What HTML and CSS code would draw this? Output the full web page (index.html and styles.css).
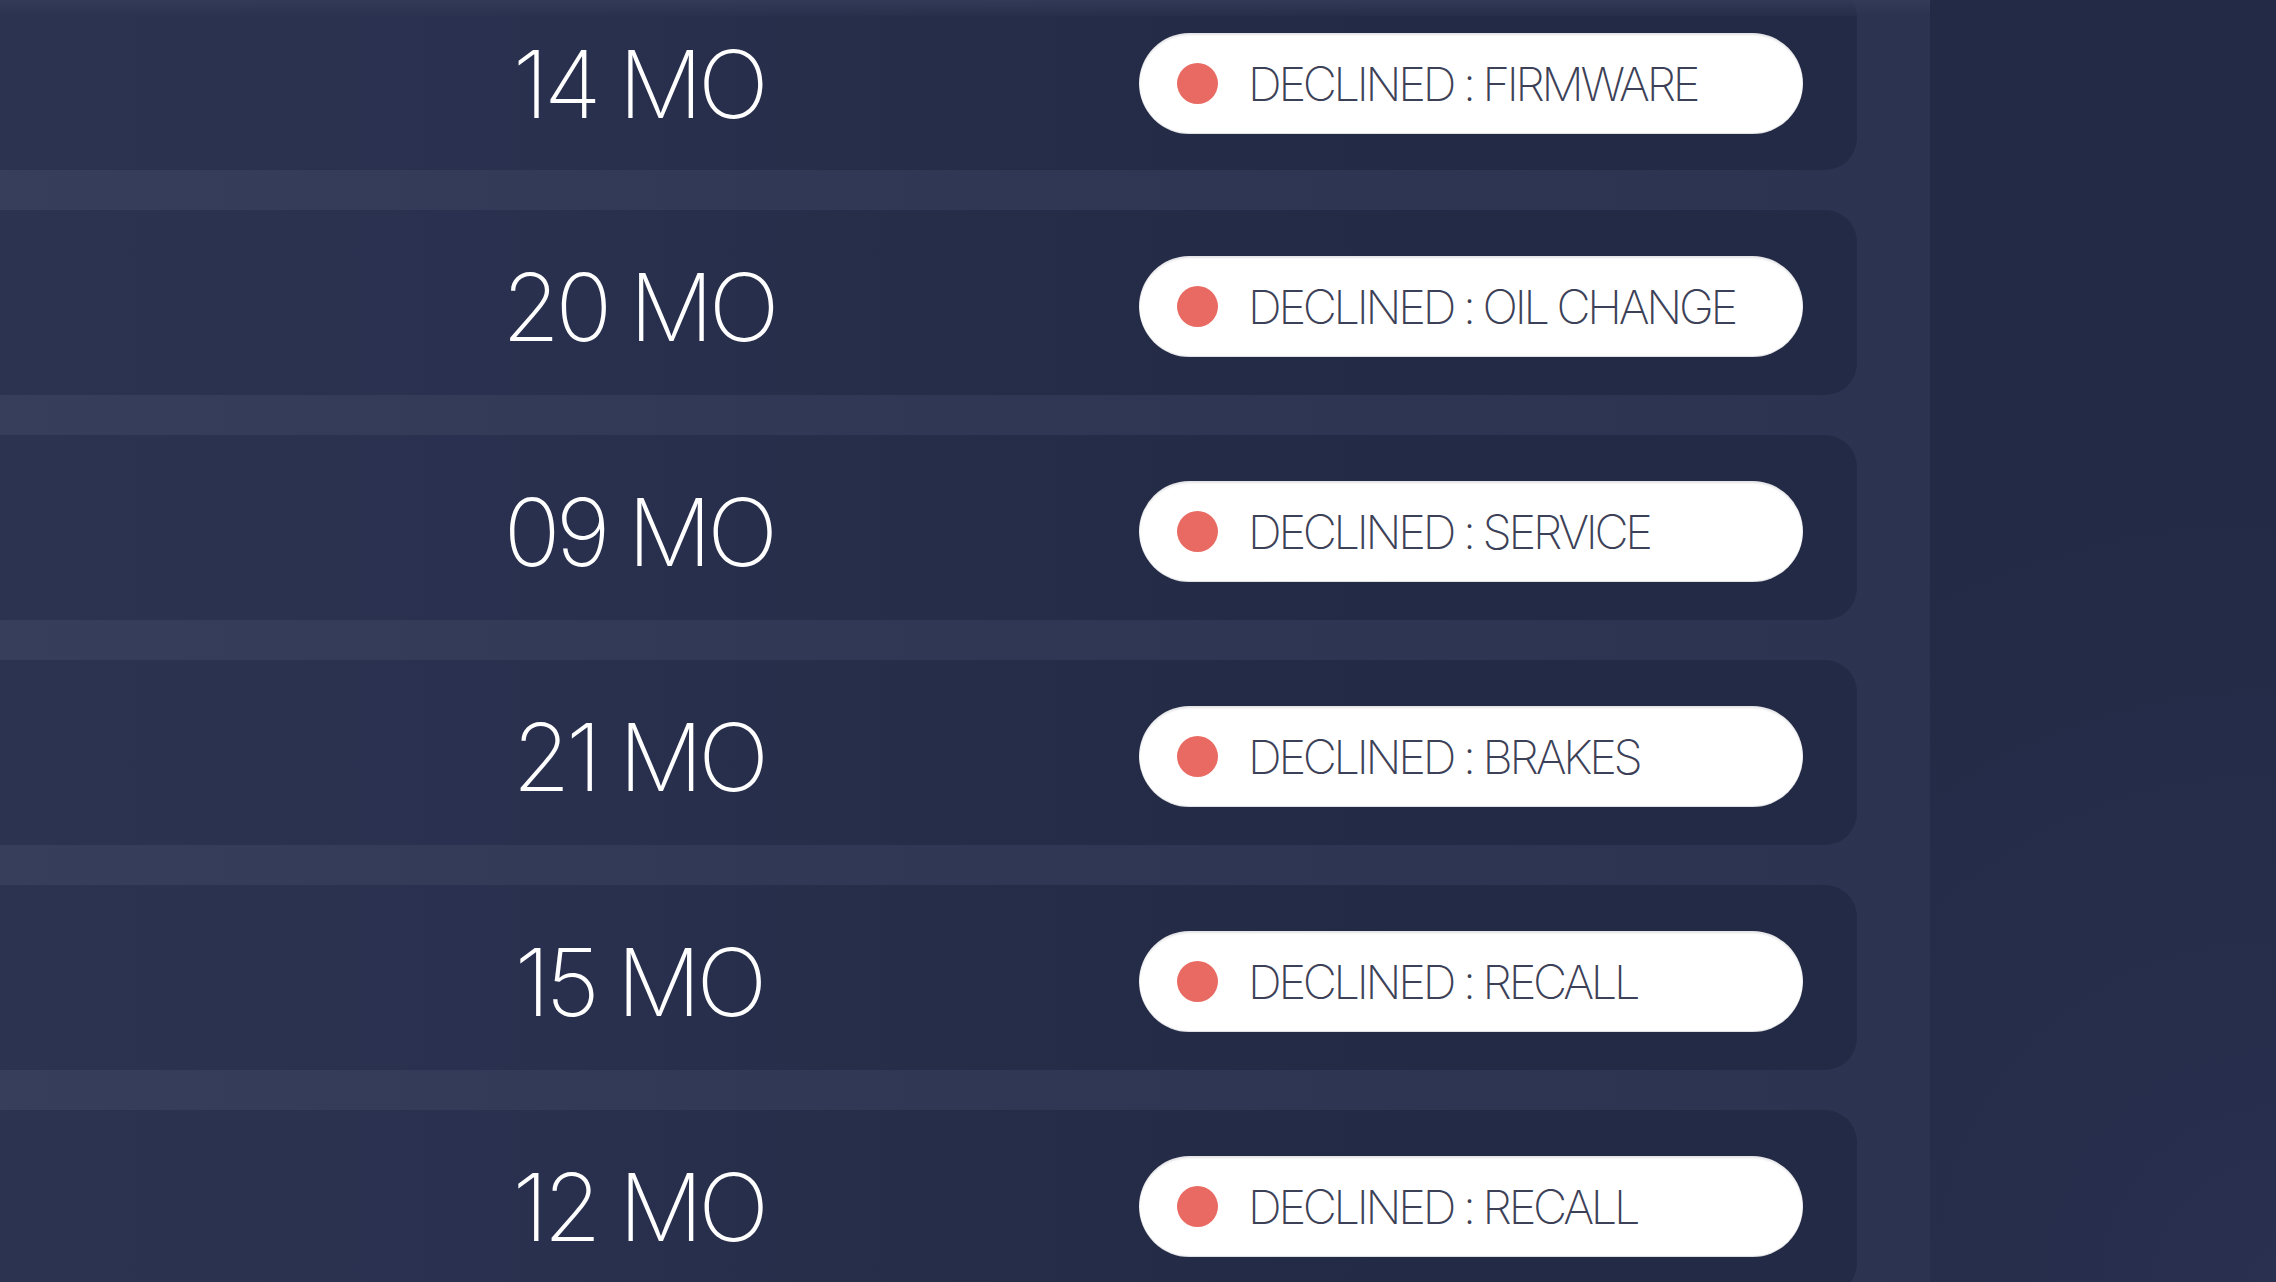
FILE: index.html
```html
<!DOCTYPE html>
<html lang="en">
<head>
<meta charset="UTF-8" />
<meta name="viewport" content="width=device-width, initial-scale=1.0"/>
<title>Declined Services</title>
<link rel="stylesheet" href="styles.css">
</head>
<body>
<div class="screen">
  <!-- list of declined services -->
  <div class="panel">
    <div class="fade"></div>
    <ul class="list">
      <li class="row">
        <div class="age">14 MO</div>
        <div class="status"><span class="dot"></span><span class="label">DECLINED : FIRMWARE</span></div>
      </li>
      <li class="row">
        <div class="age">20 MO</div>
        <div class="status"><span class="dot"></span><span class="label">DECLINED : OIL CHANGE</span></div>
      </li>
      <li class="row">
        <div class="age">09 MO</div>
        <div class="status"><span class="dot"></span><span class="label">DECLINED : SERVICE</span></div>
      </li>
      <li class="row">
        <div class="age">21 MO</div>
        <div class="status"><span class="dot"></span><span class="label">DECLINED : BRAKES</span></div>
      </li>
      <li class="row">
        <div class="age">15 MO</div>
        <div class="status"><span class="dot"></span><span class="label">DECLINED : RECALL</span></div>
      </li>
      <li class="row">
        <div class="age">12 MO</div>
        <div class="status"><span class="dot"></span><span class="label">DECLINED : RECALL</span></div>
      </li>
    </ul>
  </div>
  <div class="side"></div>
</div>
</body>
</html>
```

FILE: styles.css
```css
body {
  margin: 0;
  background: #232a45;
  font-family: Inter, "Liberation Sans", sans-serif;
  overflow: hidden;
}
.screen {
  display: flex;
  height: 1282px;
  overflow: hidden;
}
.panel {
  position: relative;
  width: 1930px;
  flex: none;
  background: linear-gradient(90deg, #373e5c 0%, #343b58 22%, #303754 50%, #2c3350 100%);
  overflow: hidden;
}
.side {
  flex: 1;
  background: radial-gradient(circle at 100% 100%, #293050 0%, #232a45 60%);
}
.fade {
  position: absolute;
  top: 0;
  left: 0;
  right: 0;
  height: 16px;
  background: linear-gradient(180deg, rgba(52, 59, 88, 0.9), rgba(44, 51, 80, 0.35));
  z-index: 2;
}
.list {
  list-style: none;
  margin: -15px 0 0;
  padding: 0;
  display: flex;
  flex-direction: column;
  gap: 40px;
}
.row {
  display: flex;
  align-items: center;
  height: 185px;
  width: 1857px;
  box-sizing: border-box;
  padding: 8px 0 0 138px;
  border-radius: 0 32px 32px 0;
  background: linear-gradient(90deg, #2c3350 0%, #2a3150 25%, #262d48 50%, #232a45 75%);
}
.list .row:first-child {
  padding-top: 12px;
}
.age {
  width: 1001px;
  text-align: center;
  color: #fff;
  font-weight: 150;
  font-size: 94px;
  letter-spacing: -0.05em;
  line-height: 1;
}
.status {
  display: flex;
  align-items: center;
  width: 664px;
  height: 101px;
  box-sizing: border-box;
  padding-left: 38px;
  border-radius: 51px;
  background: #fff;
  box-shadow: inset 0 2px 2px rgba(30, 36, 60, 0.12), inset 0 -1px 1px rgba(30, 36, 60, 0.15);
}
.dot {
  flex: none;
  width: 41px;
  height: 41px;
  margin-right: 30px;
  border-radius: 50%;
  background: #e96a62;
}
.label {
  color: #3d4157;
  font-weight: 250;
  font-size: 47px;
  letter-spacing: -0.07em;
  white-space: nowrap;
}
```
